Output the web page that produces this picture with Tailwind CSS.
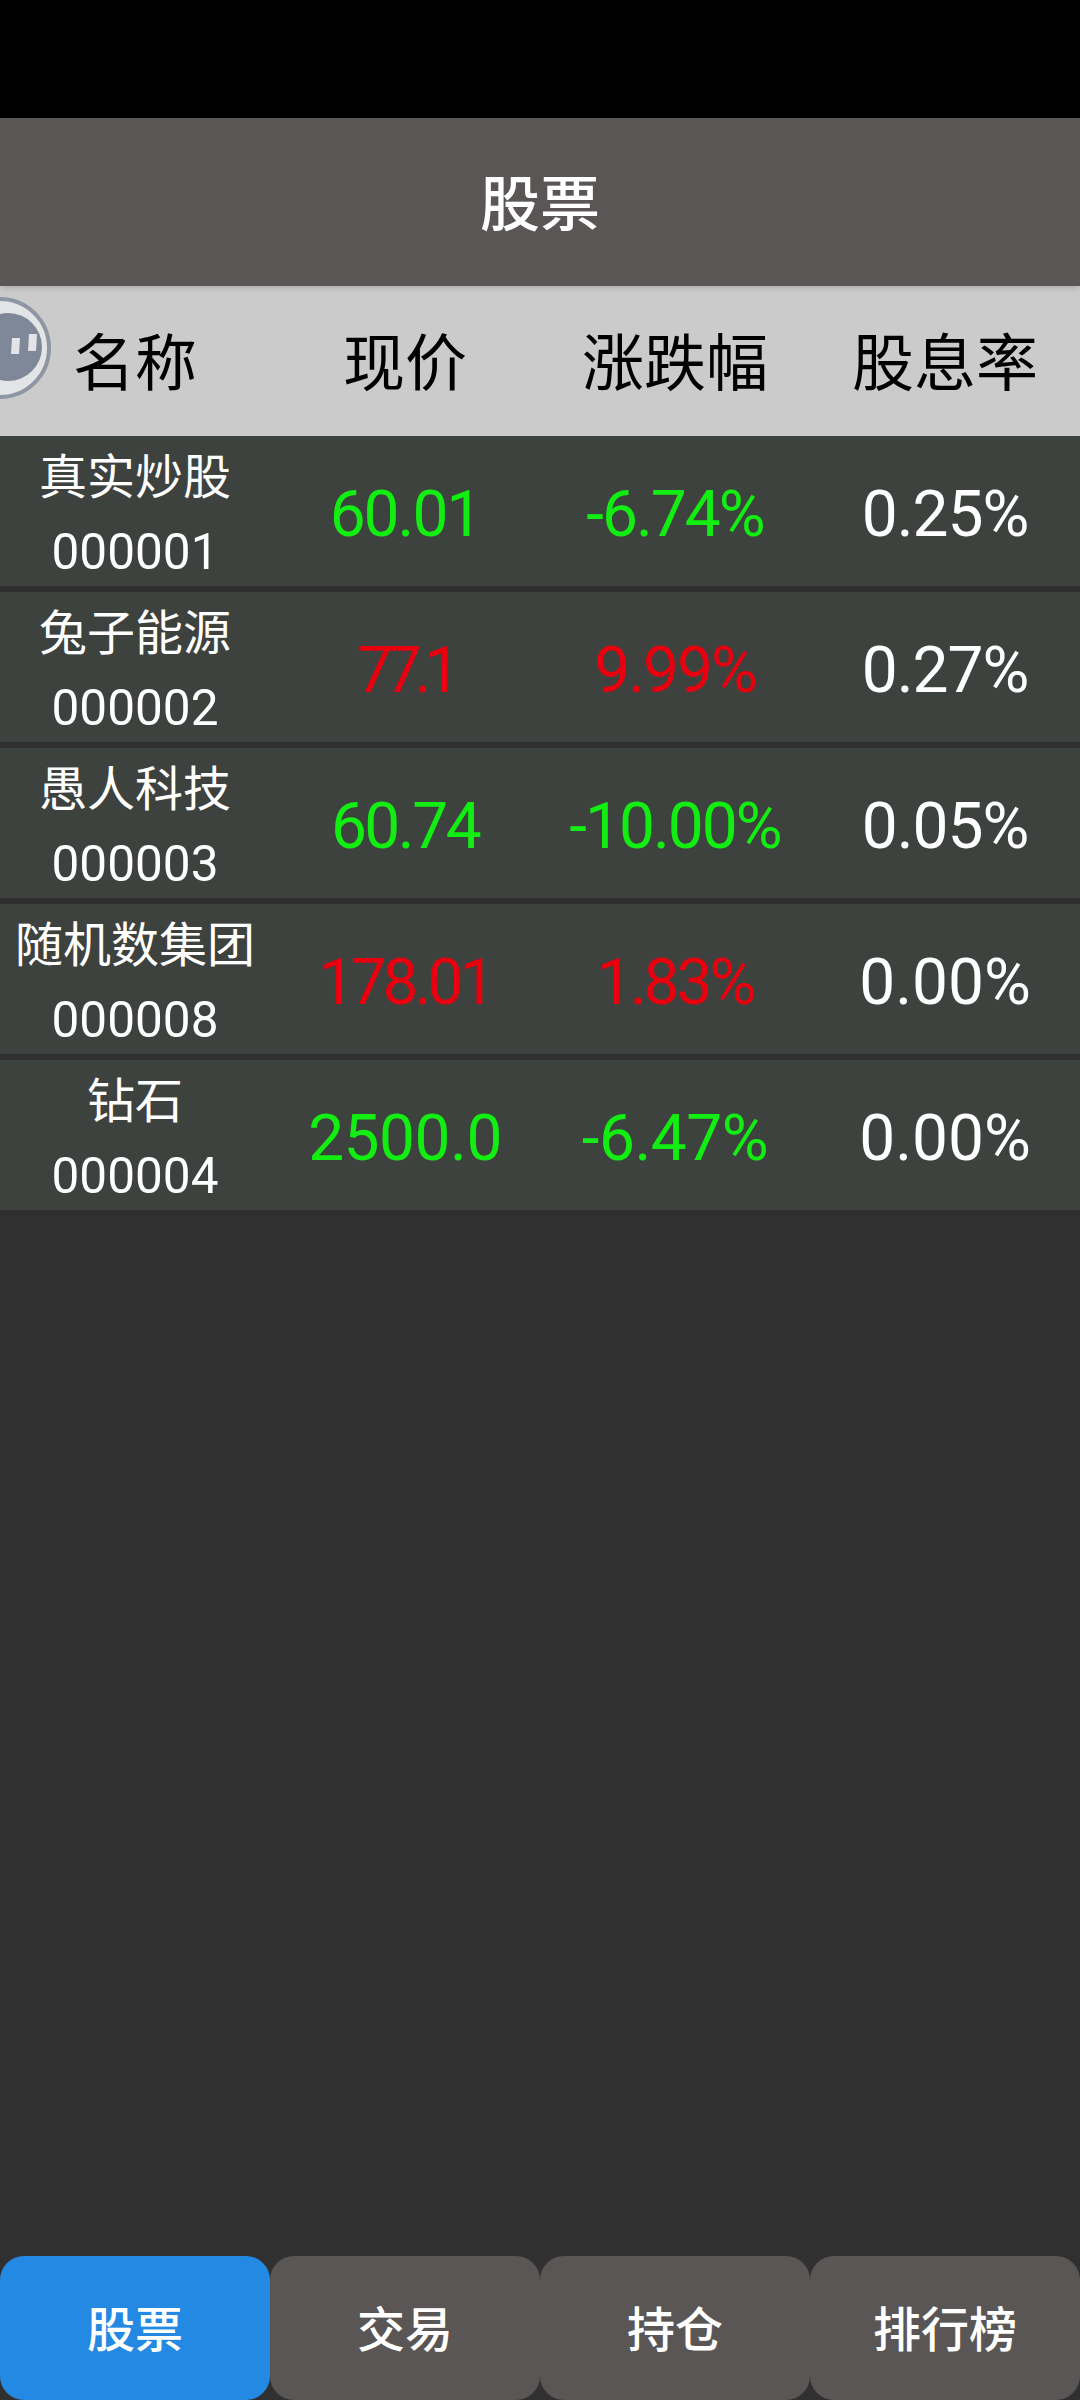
<!DOCTYPE html>
<html lang="zh-CN">
<head>
  <meta charset="UTF-8">
  <meta name="viewport" content="width=device-width, initial-scale=1.0">
  <title>股票</title>
  <script src="https://cdn.jsdelivr.net/npm/@tailwindcss/browser@4"></script>
</head>

<body class="bg-black">
  <div class="relative flex flex-col w-[1080px] h-[2400px] overflow-hidden bg-[#303030] font-['Roboto','Noto_Sans_CJK_SC',sans-serif]">
    <div class="h-[118px] bg-black"></div>

    <header class="h-[168px] pt-[7px] flex items-center justify-center bg-[#5a5655] text-white text-[60px] font-medium shadow-md z-10">股票</header>

    <!-- table head -->
    <div class="h-[150px] pt-[8px] grid grid-cols-4 items-center text-center bg-[#cbcbcb] text-black text-[62px] leading-none">
      <div>名称</div>
      <div>现价</div>
      <div>涨跌幅</div>
      <div>股息率</div>
    </div>

    <!-- floating button -->
    <svg class="absolute left-0 top-[297px]" width="52" height="104" viewBox="0 0 52 104">
      <circle cx="0" cy="51" r="49" fill="#e3e4e6" stroke="#8f96a3" stroke-width="4"/>
      <circle cx="8" cy="50" r="34" fill="#7f8899"/>
      <path d="M12 41h8l-1 16h-8z" fill="#e3e4e6"/>
      <path d="M29 37h8l-1 17h-8z" fill="#e3e4e6"/>
    </svg>

    <!-- rows -->
    <div class="flex flex-col gap-[6px] text-center text-[64px] font-normal">
      <div class="h-[150px] pt-[4px] grid grid-cols-4 items-center bg-[#3e423f]">
        <div class="flex flex-col text-white text-[48px] leading-[75px]"><span>真实炒股</span><span class="text-[49.5px]">000001</span></div>
        <div class="text-[#12ee12] tracking-[-2px]">60.01</div>
        <div class="text-[#12ee12] tracking-[-2px]">-6.74%</div>
        <div class="text-white tracking-[-1px]">0.25%</div>
      </div>
      <div class="h-[150px] pt-[4px] grid grid-cols-4 items-center bg-[#3e423f]">
        <div class="flex flex-col text-white text-[48px] leading-[75px]"><span>兔子能源</span><span class="text-[49.5px]">000002</span></div>
        <div class="text-[#e8000f] tracking-[-7px]">77.1</div>
        <div class="text-[#e8000f] tracking-[-2px]">9.99%</div>
        <div class="text-white tracking-[-1px]">0.27%</div>
      </div>
      <div class="h-[150px] pt-[4px] grid grid-cols-4 items-center bg-[#3e423f]">
        <div class="flex flex-col text-white text-[48px] leading-[75px]"><span>愚人科技</span><span class="text-[49.5px]">000003</span></div>
        <div class="text-[#12ee12] tracking-[-2.5px]">60.74</div>
        <div class="text-[#12ee12] tracking-[-2px]">-10.00%</div>
        <div class="text-white tracking-[-1px]">0.05%</div>
      </div>
      <div class="h-[150px] pt-[4px] grid grid-cols-4 items-center bg-[#3e423f]">
        <div class="flex flex-col text-white text-[48px] leading-[75px]"><span>随机数集团</span><span class="text-[49.5px]">000008</span></div>
        <div class="text-[#e8000f] tracking-[-4px]">178.01</div>
        <div class="text-[#e8000f] tracking-[-3px]">1.83%</div>
        <div class="text-white">0.00%</div>
      </div>
      <div class="h-[150px] pt-[4px] grid grid-cols-4 items-center bg-[#3e423f]">
        <div class="flex flex-col text-white text-[48px] leading-[75px]"><span>钻石</span><span class="text-[49.5px]">000004</span></div>
        <div class="text-[#12ee12] tracking-[-0.5px]">2500.0</div>
        <div class="text-[#12ee12] tracking-[-0.5px]">-6.47%</div>
        <div class="text-white">0.00%</div>
      </div>
    </div>

    <!-- bottom tabs -->
    <nav class="mt-auto h-[144px] grid grid-cols-4 text-white text-[48px] font-medium">
      <div class="pt-[6px] flex items-center justify-center rounded-[24px] bg-[#2389e3]">股票</div>
      <div class="pt-[6px] flex items-center justify-center rounded-[24px] bg-[#5a5655]">交易</div>
      <div class="pt-[6px] flex items-center justify-center rounded-[24px] bg-[#5a5655]">持仓</div>
      <div class="pt-[6px] flex items-center justify-center rounded-[24px] bg-[#5a5655]">排行榜</div>
    </nav>
  </div>
</body>
</html>
